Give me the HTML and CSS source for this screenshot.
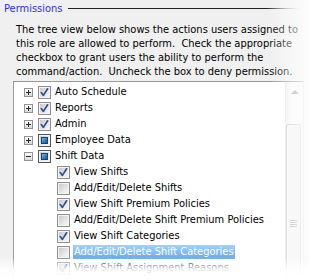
FILE: index.html
```
<!DOCTYPE html>
<html lang="en">

<head>
    <meta charset="UTF-8">
    <title>Permissions</title>
    <link rel="stylesheet" href="styles.css">
</head>

<body>
    <div class="panel">
        <div class="group-title">
            <span class="title-text">Permissions</span>
            <span class="title-line"></span>
        </div>

        <p class="intro">The tree view below shows the actions users assigned to
this role are allowed to perform.  Check the appropriate
checkbox to grant users the ability to perform the
command/action.  Uncheck the box to deny permission.</p>

        <div class="tree">
            <ul class="tree-list">
                <li class="node"><span class="expander plus"></span><span class="check checked"></span><span class="label">Auto Schedule</span></li>
                <li class="node"><span class="expander plus"></span><span class="check checked"></span><span class="label">Reports</span></li>
                <li class="node"><span class="expander plus"></span><span class="check checked"></span><span class="label">Admin</span></li>
                <li class="node"><span class="expander plus"></span><span class="check partial"></span><span class="label">Employee Data</span></li>
                <li class="node"><span class="expander minus"></span><span class="check partial"></span><span class="label">Shift Data</span></li>
                <li class="node child"><span class="check checked"></span><span class="label">View Shifts</span></li>
                <li class="node child"><span class="check"></span><span class="label">Add/Edit/Delete Shifts</span></li>
                <li class="node child"><span class="check checked"></span><span class="label">View Shift Premium Policies</span></li>
                <li class="node child"><span class="check"></span><span class="label">Add/Edit/Delete Shift Premium Policies</span></li>
                <li class="node child"><span class="check checked"></span><span class="label">View Shift Categories</span></li>
                <li class="node child"><span class="check"></span><span class="label selected">Add/Edit/Delete Shift Categories</span></li>
                <li class="node child"><span class="check checked"></span><span class="label">View Shift Assignment Reasons</span></li>
            </ul>

            <div class="scrollbar">
                <span class="arrow-up"></span>
                <div class="thumb"><span class="grip"></span></div>
            </div>
        </div>

        <div class="fade-right"></div>
        <div class="fade-bottom"></div>
    </div>

    <script>
        // draw the tick into every checked box
        const tick = '<svg width="13" height="13" viewBox="0 0 13 13"><path d="M3.3 6.6 L5.4 9.4 L9.6 2.8" fill="none" stroke="#2c4f9c" stroke-width="1.7" stroke-linecap="round" stroke-linejoin="round"/></svg>';
        document.querySelectorAll(".check.checked").forEach(box => {
            box.innerHTML = tick;
        });
    </script>
</body>

</html>
```

FILE: styles.css
```
body {
    margin: 0;
    font-family: "DejaVu Sans Condensed", "Liberation Sans", sans-serif;
    font-size: 11px;
    color: #000;
    background: #fff;
}

.panel {
    position: relative;
    width: 309px;
    height: 279px;
    overflow: hidden;
    background: #f0f0f0;
}

.group-title {
    display: flex;
    align-items: center;
    gap: 6px;
    padding: 1px 0 0 4px;
    height: 14px;
}

.title-text {
    color: #2d2df2;
}

.title-line {
    width: 232px;
    height: 1px;
    background: linear-gradient(to right, #222 0%, #222 85%, rgba(34, 34, 34, 0) 100%);
}

.intro {
    margin: 8px 0 0 16px;
    white-space: pre;
    line-height: 14px;
}

.tree {
    display: flex;
    margin: 2px 0 0 13px;
    width: 289px;
    height: 220px;
    background: #fff;
    border-top: 1px solid #9a9a9a;
    border-left: 1px solid #9a9a9a;
    border-right: 1px solid #d8d8d8;
}

.tree-list {
    flex: 1;
    list-style: none;
    margin: 0;
    padding: 2px 0 0 0;
}

.node {
    display: flex;
    align-items: center;
    height: 16px;
    padding-left: 10px;
    white-space: nowrap;
}

.node.child {
    padding-left: 43px;
}

.expander {
    position: relative;
    box-sizing: border-box;
    width: 9px;
    height: 9px;
    margin-right: 5px;
    border: 1px solid #939393;
    background: linear-gradient(to bottom, #fdfdfd, #dadada);
}

.expander::before,
.expander::after {
    content: "";
    position: absolute;
    background: #1f2a44;
}

.expander::before {
    left: 1px;
    top: 3px;
    width: 5px;
    height: 1px;
}

.expander.plus::after {
    left: 3px;
    top: 1px;
    width: 1px;
    height: 5px;
}

.check {
    position: relative;
    box-sizing: border-box;
    width: 13px;
    height: 13px;
    margin-right: 3px;
    border: 1px solid #8f8f8f;
    background: linear-gradient(135deg, #c4c4c4 0%, #e6e6e6 55%, #fafafa 100%);
    box-shadow: inset 0 0 0 1px #f4f4f4;
}

.check svg {
    position: absolute;
    left: -1px;
    top: -1px;
}

.check.partial {
    border-color: #555;
}

.check.partial::after {
    content: "";
    position: absolute;
    left: 2px;
    top: 2px;
    box-sizing: border-box;
    width: 7px;
    height: 7px;
    border: 1px solid #1c3f74;
    background: linear-gradient(135deg, #6cc0f0 0%, #2a7cc4 60%, #1a5aa0 100%);
}

.label {
    padding: 0 1px;
    line-height: 14px;
}

.label.selected {
    color: #fff;
    background: linear-gradient(to bottom, #a6d0f8, #64a8ee);
}

.scrollbar {
    position: relative;
    width: 17px;
    background: linear-gradient(to right, #f0f0f0, #fafafa 40%, #f0f0f0);
    border-left: 1px solid #e6e6e6;
}

.arrow-up {
    display: block;
    width: 0;
    height: 0;
    margin: 8px auto 0;
    border-left: 4px solid transparent;
    border-right: 4px solid transparent;
    border-bottom: 4px solid #9a9a9a;
}

.thumb {
    box-sizing: border-box;
    width: 15px;
    height: 200px;
    margin-top: 30px;
    border: 1px solid #c8c8c8;
    border-radius: 2px;
    background: linear-gradient(to right, #f6f6f6, #ececec);
    padding-top: 95px;
}

.grip {
    display: block;
    width: 7px;
    height: 7px;
    margin: 0 auto;
    background: repeating-linear-gradient(to bottom, #a8a8a8 0, #a8a8a8 1px, #f4f4f4 1px, #f4f4f4 2px);
}

.fade-right {
    position: absolute;
    top: 0;
    right: 0;
    width: 40px;
    height: 100%;
    background: linear-gradient(to right, rgba(255, 255, 255, 0), rgba(255, 255, 255, 0.85));
    pointer-events: none;
}

.fade-bottom {
    position: absolute;
    left: 0;
    bottom: 0;
    width: 100%;
    height: 22px;
    background: linear-gradient(to bottom, rgba(255, 255, 255, 0), rgba(255, 255, 255, 0.88) 55%, #fff);
    pointer-events: none;
}
```
